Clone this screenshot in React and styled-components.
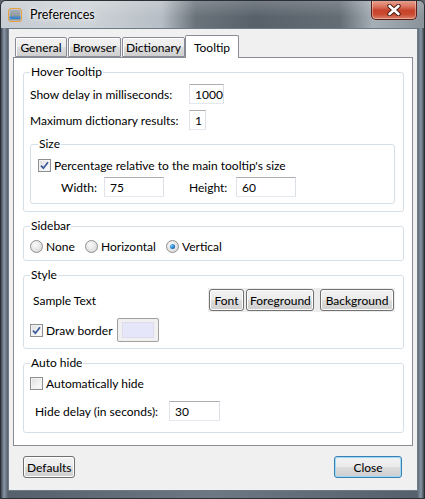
import React from 'react'
import styled, { createGlobalStyle } from 'styled-components'

const GlobalStyle = createGlobalStyle`
  html, body {
    margin: 0;
    padding: 0;
    background: #5b646d;
  }
  body {
    font-family: Lato, "Open Sans", sans-serif;
    font-size: 12px;
    color: #000;
  }
`

const Window = styled.div`
  width: 425px;
  height: 499px;
  box-sizing: border-box;
  display: flex;
  flex-direction: column;
  border: 1px solid #2b3036;
  border-radius: 6px 6px 0 0;
  overflow: hidden;
  background: linear-gradient(90deg, #3e464e 0px, #8896a5 3px, #56606a 7px, #6e7882 50%, #56606a calc(100% - 7px), #8896a5 calc(100% - 3px), #3e464e 100%);
`

const TitleBar = styled.div`
  position: relative;
  height: 27px;
  flex: none;
  display: flex;
  align-items: center;
  gap: 8px;
  padding-left: 7px;
  background:
    linear-gradient(180deg, rgba(255,255,255,0.18), rgba(255,255,255,0) 60%),
    linear-gradient(90deg, #c6ccd2 0%, #cfd4d9 20%, #b6bdc4 38%, #6a727a 46%, #58616a 60%, #646c74 80%, #a6aeb6 88%, #8a929a 100%);
`

const AppIcon = styled.span`
  width: 12px;
  height: 12px;
  border: 1.5px solid #e5a23a;
  border-radius: 3px;
  background: linear-gradient(180deg, #aab1b8 0%, #8e969e 62%, #3f86c9 63%, #3f86c9 80%, #8e969e 81%);
  box-shadow: inset 0 0 0 1px rgba(255,255,255,0.3);
`

const Title = styled.span`
  font-size: 12.5px;
  color: #000;
  text-shadow: 0 0 6px #fff, 0 0 3px #fff;
`

const CloseCaption = styled.button`
  position: absolute;
  top: -1px;
  right: 7px;
  width: 46px;
  height: 20px;
  padding: 0;
  border: 1px solid #5a1f15;
  border-top: none;
  border-radius: 0 0 5px 5px;
  background: linear-gradient(180deg, #e9a896 0%, #d9735e 35%, #c6432b 55%, #c94a30 75%, #dc8068 100%);
  box-shadow: inset 0 0 0 1px rgba(255,255,255,0.35);
  display: flex;
  align-items: center;
  justify-content: center;
`

const Client = styled.div`
  flex: 1;
  display: flex;
  flex-direction: column;
  margin: 0 6px 7px 7px;
  border: 1px solid #6d7a87;
  background: #f0f0f0;
  padding: 6px 4px 0 4px;
  min-height: 0;
`

const TabStrip = styled.div`
  display: flex;
  align-items: flex-end;
  height: 22px;
  padding-left: 2px;
  gap: 1px;
  position: relative;
  z-index: 1;
`

const Tab = styled.div`
  box-sizing: border-box;
  width: ${p => p.$w};
  height: ${p => (p.$active ? '23px' : '20px')};
  margin: ${p => (p.$active ? '0 0 -1px -1px' : '0')};
  display: flex;
  align-items: center;
  justify-content: center;
  border: 1px solid #898c95;
  border-bottom: ${p => (p.$active ? 'none' : '1px solid #898c95')};
  border-radius: 2px 2px 0 0;
  background: ${p => (p.$active ? '#fff' : 'linear-gradient(180deg, #f2f2f2 0%, #ebebeb 50%, #dddddd 51%, #cfcfcf 100%)')};
  box-shadow: ${p => (p.$active ? 'none' : 'inset 1px 1px 0 #fff')};
  font-size: 12px;
  padding-top: ${p => (p.$active ? '0' : '1px')};
  position: relative;
  z-index: ${p => (p.$active ? 2 : 1)};
`

const Pane = styled.div`
  flex: 1;
  min-height: 0;
  border: 1px solid #898c95;
  background: #fff;
  padding: 6px 8px 0 9px;
  display: flex;
  flex-direction: column;
  gap: 6px;
`

const Group = styled.fieldset`
  margin: 0;
  min-inline-size: 0;
  border: 1px solid #d5dfe5;
  border-radius: 3px;
  padding: ${p => p.$pad || '0 8px 7px 6px'};
  display: flex;
  flex-direction: column;
  gap: ${p => p.$gap || '6px'};
`

const Legend = styled.legend`
  padding: 0 1px;
  margin: 0;
  font-size: 12px;
  line-height: 16px;
  height: 16px;
`

const FormRow = styled.div`
  display: flex;
  align-items: center;
  height: ${p => p.$h || '20px'};
  padding-left: ${p => p.$indent || '0'};
`

const Label = styled.span`
  font-size: 12px;
  white-space: nowrap;
  width: ${p => p.$w || 'auto'};
  flex: none;
  padding-left: ${p => p.$indent || '0'};
  box-sizing: border-box;
`

const TextBox = styled.div`
  box-sizing: border-box;
  width: ${p => p.$w};
  height: 20px;
  border: 1px solid;
  border-color: #abadb3 #dbdfe6 #e3e9ef #e2e3ea;
  background: #fff;
  font-size: 12px;
  padding: 0 0 0 5px;
  display: flex;
  align-items: center;
  flex: none;
`

const Check = styled.span`
  box-sizing: border-box;
  width: 13px;
  height: 13px;
  flex: none;
  border: 1px solid #8e8f8f;
  background: linear-gradient(135deg, #dcdcdc 0%, #f4f4f4 60%, #fbfbfb 100%);
  box-shadow: inset 0 0 0 1px #f3f3f3;
  display: flex;
  align-items: center;
  justify-content: center;
  margin-right: 3px;
`

const Radio = styled.span`
  box-sizing: border-box;
  width: 13px;
  height: 13px;
  flex: none;
  border-radius: 50%;
  border: 1px solid #8e8f8f;
  background: radial-gradient(circle at 40% 35%, #fafafa 0%, #e4e4e4 55%, #cfcfcf 100%);
  display: flex;
  align-items: center;
  justify-content: center;
  margin-right: 3px;
  &::after {
    content: '';
    display: ${p => (p.$on ? 'block' : 'none')};
    width: 5px;
    height: 5px;
    border-radius: 50%;
    background: radial-gradient(circle at 35% 35%, #7fd0ff 0%, #1d7ac9 55%, #0b3a6b 100%);
  }
`

const RadioItem = styled.label`
  display: flex;
  align-items: center;
  font-size: 12px;
  width: ${p => p.$w || 'auto'};
`

const Toolbar = styled.div`
  margin-left: auto;
  display: flex;
  align-items: center;
  gap: 2px;
  padding: 1px;
  background: #ececec;
`

const Button = styled.button`
  box-sizing: border-box;
  height: 22px;
  width: ${p => p.$w || 'auto'};
  padding: 0 3px;
  margin-left: ${p => p.$ml || '0'};
  font-family: inherit;
  font-size: 12px;
  color: #000;
  border: 1px solid ${p => (p.$default ? '#3c7fb1' : '#707070')};
  border-radius: 3px;
  background: linear-gradient(180deg, #f2f2f2 0%, #ebebeb 50%, #dddddd 51%, #cfcfcf 100%);
  box-shadow: inset 0 0 0 1px ${p => (p.$default ? '#9ad9f7' : '#fcfcfc')};
`

const ColorButton = styled.div`
  box-sizing: border-box;
  width: 42px;
  height: 24px;
  margin-left: 6px;
  border: 1px solid #a0a0a0;
  border-radius: 2px;
  background: #f0f0f0;
  padding: 4px 5px;
  &::after {
    content: '';
    display: block;
    height: 100%;
    background: #e6e6fa;
    box-shadow: 0 0 0 1px #dcdcec;
  }
`

const Footer = styled.div`
  box-sizing: border-box;
  height: 44px;
  flex: none;
  display: flex;
  justify-content: space-between;
  align-items: flex-start;
  padding: 10px 11px 0 10px;
`

const CheckMark = () => (
  <svg width="9" height="9" viewBox="0 0 9 9">
    <path d="M1 4.6 L3.4 7.2 L8 1.2" fill="none" stroke="#3b5a9d" strokeWidth="1.7" />
  </svg>
)

const CheckBox = ({ checked }) => (
  <Check>{checked && <CheckMark />}</Check>
)

const CloseX = () => (
  <svg width="14" height="12" viewBox="0 0 14 12">
    <path d="M2.5 2 L11.5 10 M11.5 2 L2.5 10" stroke="#4a1b12" strokeWidth="4.4" strokeLinecap="round" />
    <path d="M2.5 2 L11.5 10 M11.5 2 L2.5 10" stroke="#fff" strokeWidth="2.6" strokeLinecap="round" />
  </svg>
)

export default function App() {
  return (
    <>
      <GlobalStyle />
      <Window>
        <TitleBar>
          <AppIcon />
          <Title>Preferences</Title>
          <CloseCaption aria-label="Close"><CloseX /></CloseCaption>
        </TitleBar>
        <Client>
          <TabStrip>
            <Tab $w="52px">General</Tab>
            <Tab $w="53px">Browser</Tab>
            <Tab $w="63px">Dictionary</Tab>
            <Tab $w="54px" $active>Tooltip</Tab>
          </TabStrip>
          <Pane>
            <Group $pad="4px 8px 7px 6px">
              <Legend>Hover Tooltip</Legend>
              <FormRow>
                <Label $w="159px">Show delay in milliseconds:</Label>
                <TextBox $w="35px">1000</TextBox>
              </FormRow>
              <FormRow>
                <Label $w="159px">Maximum dictionary results:</Label>
                <TextBox $w="17px">1</TextBox>
              </FormRow>
              <Group $pad="3px 8px 6px 7px" $gap="2px">
                <Legend>Size</Legend>
                <FormRow>
                  <CheckBox checked />
                  <Label>Percentage relative to the main tooltip's size</Label>
                </FormRow>
                <FormRow $indent="23px">
                  <Label $w="43px">Width:</Label>
                  <TextBox $w="60px">75</TextBox>
                  <Label $w="72px" $indent="25px">Height:</Label>
                  <TextBox $w="60px">60</TextBox>
                </FormRow>
              </Group>
            </Group>

            <Group $pad="2px 8px 4px 6px">
              <Legend>Sidebar</Legend>
              <FormRow>
                <RadioItem $w="55px"><Radio />None</RadioItem>
                <RadioItem $w="81px"><Radio />Horizontal</RadioItem>
                <RadioItem><Radio $on />Vertical</RadioItem>
              </FormRow>
            </Group>

            <Group $pad="4px 8px 6px 6px" $gap="5px">
              <Legend>Style</Legend>
              <FormRow $h="26px">
                <Label $indent="3px">Sample Text</Label>
                <Toolbar>
                  <Button $w="35px">Font</Button>
                  <Button $w="68px">Foreground</Button>
                  <Button $w="74px" $ml="4px">Background</Button>
                </Toolbar>
              </FormRow>
              <FormRow $h="24px">
                <CheckBox checked />
                <Label $w="65px">Draw border</Label>
                <ColorButton />
              </FormRow>
            </Group>

            <Group $pad="2px 8px 11px 6px" $gap="8px">
              <Legend>Auto hide</Legend>
              <FormRow>
                <CheckBox />
                <Label>Automatically hide</Label>
              </FormRow>
              <FormRow>
                <Label $w="139px" $indent="5px">Hide delay (in seconds):</Label>
                <TextBox $w="51px">30</TextBox>
              </FormRow>
            </Group>
          </Pane>
          <Footer>
            <Button $w="52px">Defaults</Button>
            <Button $w="68px" $default>Close</Button>
          </Footer>
        </Client>
      </Window>
    </>
  )
}
